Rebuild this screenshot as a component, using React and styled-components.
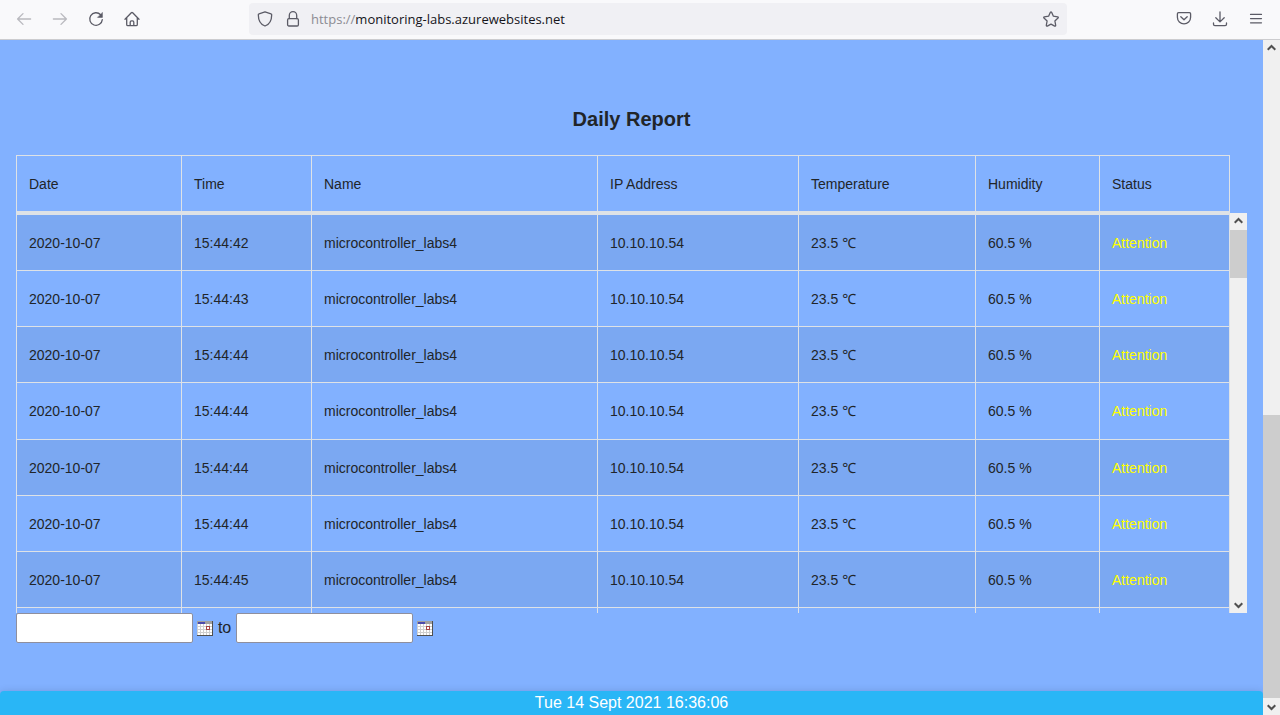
import React from "react";
import styled, { createGlobalStyle } from "styled-components";

const GlobalStyle = createGlobalStyle`
  *, *::before, *::after { box-sizing: border-box; }
  body {
    margin: 0;
    background: #82b1ff;
    color: #212529;
    font-family: "Liberation Sans", Arial, "Noto Sans", "Open Sans", sans-serif;
    font-size: 16px;
    line-height: 24px;
  }
`;

const Window = styled.div`
  display: flex;
  flex-direction: column;
  height: 100vh;
  overflow: hidden;
`;

const Toolbar = styled.header`
  display: flex;
  flex: none;
  align-items: center;
  height: 40px;
  padding: 0 16px 1px;
  background: #f9f9fb;
  border-bottom: 1px solid #cccccf;
`;

const ButtonGroup = styled.div`
  display: flex;
  gap: ${(p) => p.$gap || 20}px;
`;

const IconButton = styled.button`
  display: block;
  width: 16px;
  height: 16px;
  padding: 0;
  border: 0;
  background: none;
  color: #5b5b66;
  opacity: ${(p) => (p.disabled ? 0.4 : 1)};

  svg { display: block; }
`;

const AddressBar = styled.div`
  display: flex;
  flex: 1;
  align-items: center;
  gap: 10px;
  height: 32px;
  margin: 0 109px;
  padding: 0 8px;
  border-radius: 4px;
  background: #f0f0f4;
`;

const Address = styled.a`
  flex: 1;
  color: #15141a;
  font-family: "Open Sans", "Noto Sans", sans-serif;
  font-size: 13px;
  text-decoration: none;
`;

const Scheme = styled.span`
  color: #8c8c93;
`;

const Viewport = styled.div`
  display: flex;
  flex: 1;
  min-height: 0;
`;

const Page = styled.div`
  display: flex;
  flex: 1;
  flex-direction: column;
  min-width: 0;
`;

const Main = styled.main`
  flex: 1;
  padding: 67px 16px 0;
`;

const Title = styled.h1`
  margin: 0 0 24px;
  font-size: 20px;
  line-height: 24px;
  text-align: center;
`;

const TableFrame = styled.div`
  display: flex;
  height: 458px;
`;

const TableClip = styled.div`
  flex: 1;
  overflow: hidden;
`;

const Table = styled.table`
  width: 100%;
  height: 509px;
  table-layout: fixed;
  border-collapse: separate;
  border-spacing: 0;
  border: solid #dee2e6;
  border-width: 1px 0 0 1px;
  font-size: 14px;
  line-height: 21px;
`;

const HeadCell = styled.th`
  padding: 18px 12px 16px;
  border: solid #dee2e6;
  border-width: 0 1px 4px 0;
  font-weight: 400;
  text-align: left;
`;

const Row = styled.tr`
  &:nth-child(odd) { background: rgba(0, 0, 0, 0.05); }
`;

const Cell = styled.td`
  height: 56px;
  padding: 18px 12px 16px;
  border: solid #dee2e6;
  border-width: 0 1px 1px 0;
  color: ${(p) => (p.$alert ? "#ffff00" : "inherit")};
`;

const Track = styled.div`
  display: flex;
  flex: none;
  flex-direction: column;
  width: 17px;
  margin-top: ${(p) => p.$top || 0}px;
  background: #f0f0f0;
`;

const TrackButton = styled.button`
  display: flex;
  flex: none;
  align-items: center;
  justify-content: center;
  height: 17px;
  padding: 0;
  border: 0;
  background: #f0f0f0;
`;

const TrackSpace = styled.div`
  flex: ${(p) => p.$grow} 1 0;
`;

const Thumb = styled.div`
  flex: ${(p) => p.$grow} 1 0;
  background: #cdcdcd;
`;

const RangeForm = styled.form`
  height: 30px;
  line-height: 30px;
  white-space: nowrap;
`;

const DateInput = styled.input`
  width: 177px;
  height: 30px;
  padding: 1px 4px;
  border: 1px solid #8f8f9d;
  border-radius: 2px;
  background: #fff;
  color: #212529;
  font: inherit;
  vertical-align: top;
`;

const CalendarButton = styled.button`
  width: 16px;
  height: 15px;
  padding: 0;
  border: 0;
  background: none;
  vertical-align: middle;

  svg { display: block; }
`;

const Footer = styled.footer`
  height: 24px;
  border-radius: 4px 4px 0 0;
  background: #29b6f6;
  box-shadow: 0 2px 10px rgba(0, 0, 0, 0.2);
  color: #fff;
  text-align: center;
`;

const Glyph = ({ children, width = 1.3 }) => (
  <svg
    width="16"
    height="16"
    viewBox="0 0 16 16"
    fill="none"
    stroke="currentColor"
    strokeWidth={width}
    strokeLinecap="round"
    strokeLinejoin="round"
    aria-hidden="true"
  >
    {children}
  </svg>
);

const Chevron = ({ down }) => (
  <svg width="9" height="9" viewBox="0 0 9 9" fill="none" stroke="#505050" strokeWidth="2" aria-hidden="true">
    <path d={down ? "M.7 3.200 4.500 7 8.300 3.200" : "M.7 5.800 4.500 2 8.300 5.800"} />
  </svg>
);

const CalendarIcon = () => (
  <svg width="16" height="15" viewBox="0 0 16 15" shapeRendering="crispEdges" aria-hidden="true">
    <path fill="#fff" d="M0 0h16v15H0z" />
    <path
      stroke="#cfcfcf"
      d="M0 5.5h15M0 8.5h15M0 11.5h15M3.5 3v11M6.5 3v11M9.5 3v11M12.5 3v11M.5 3v11"
    />
    <path fill="#a0a0a0" d="M0 0h16v3H0z" />
    <path fill="#4a4aad" d="M1 1h7v2H1z" />
    <path fill="#fff" stroke="#a84444" d="M9.5 5.5h3v3h-3z" />
    <path fill="#505050" d="M15 0h1v15H0v-1h15z" />
  </svg>
);

const ScrollBar = ({ label, before, thumb, after, top }) => (
  <Track $top={top}>
    <TrackButton type="button" aria-label={`Scroll ${label} up`}><Chevron /></TrackButton>
    <TrackSpace $grow={before} />
    <Thumb $grow={thumb} />
    <TrackSpace $grow={after} />
    <TrackButton type="button" aria-label={`Scroll ${label} down`}><Chevron down /></TrackButton>
  </Track>
);

const columns = [
  ["Date", 165],
  ["Time", 130],
  ["Name", 286],
  ["IP Address", 201],
  ["Temperature", 177],
  ["Humidity", 124],
  ["Status", 130],
];

const times = [
  "15:44:42",
  "15:44:43",
  "15:44:44",
  "15:44:44",
  "15:44:44",
  "15:44:44",
  "15:44:45",
];

export default function App() {
  return (
    <Window>
      <GlobalStyle />
      <Toolbar>
        <ButtonGroup>
          <IconButton type="button" aria-label="Back" disabled>
            <Glyph><path d="M14.6 8H1.6M7 2.6 1.6 8 7 13.4" /></Glyph>
          </IconButton>
          <IconButton type="button" aria-label="Forward" disabled>
            <Glyph><path d="M1.4 8h13M9 2.6 14.4 8 9 13.4" /></Glyph>
          </IconButton>
          <IconButton type="button" aria-label="Reload">
            <Glyph>
              <path d="M12.6 3.7A6.3 6.3 0 1 0 14.3 8.6" />
              <path d="M14.4 1.8v4.6H9.8z" fill="currentColor" strokeWidth="0.6" />
            </Glyph>
          </IconButton>
          <IconButton type="button" aria-label="Home">
            <Glyph>
              <path d="M1 8.3 7.3 1.8q.7-.6 1.4 0L15 8.3M2.7 7v6.4q0 1.2 1.2 1.2h8.2q1.2 0 1.2-1.2V7" />
              <path d="M6.2 14.4v-3.2q0-1.4 1.3-1.4h1q1.3 0 1.3 1.4v3.2" />
            </Glyph>
          </IconButton>
        </ButtonGroup>
        <AddressBar>
          <ButtonGroup $gap={12}>
            <IconButton type="button" aria-label="Tracking protection">
              <Glyph>
                <path d="M8 .8 14 2.8q.7.2.7.9C14.7 8.600 12.400 13.400 8 15 3.600 13.400 1.300 8.600 1.300 3.700q0-.7.7-.9z" />
              </Glyph>
            </IconButton>
            <IconButton type="button" aria-label="Connection security">
              <Glyph>
                <rect x="2.6" y="7.6" width="10.8" height="7.4" rx="1.3" />
                <path d="M4.3 7.6V4.400a3.700 3.700 0 0 1 7.400 0v3.200" />
              </Glyph>
            </IconButton>
          </ButtonGroup>
          <Address href="https://monitoring-labs.azurewebsites.net">
            <Scheme>https://</Scheme>monitoring-labs.azurewebsites.net
          </Address>
          <IconButton type="button" aria-label="Bookmark this page">
            <Glyph>
              <path d="M7.4 1.3q.6-1 1.2 0l1.8 3.9 4.2.6q1.1.3.4 1.2l-3.1 3 .8 4.3q0 1.1-1 .8L8 13.100l-3.700 2q-1 .3-1-.8l.8-4.300-3.100-3q-.7-.9.4-1.200l4.200-.6z" />
            </Glyph>
          </IconButton>
        </AddressBar>
        <ButtonGroup>
          <IconButton type="button" aria-label="Save to Pocket">
            <Glyph>
              <path d="M2.5 1.700h11q1.100 0 1.100 1.100v3.500a6.600 6.600 0 0 1-13.200 0V2.800q0-1.100 1.100-1.100z" />
              <path d="M4.8 5.700 8 8.800l3.200-3.100" />
            </Glyph>
          </IconButton>
          <IconButton type="button" aria-label="Downloads">
            <Glyph>
              <path d="M8 .8v9.800M3.800 6.700 8 10.900l4.200-4.200" />
              <path d="M1.500 12v1.200q0 1.400 1.400 1.400h10.200q1.400 0 1.400-1.400V12" />
            </Glyph>
          </IconButton>
          <IconButton type="button" aria-label="Open menu">
            <Glyph width={1.2}><path d="M2.500 3.400h11M2.500 7.600h11M2.500 11.800h11" /></Glyph>
          </IconButton>
        </ButtonGroup>
      </Toolbar>
      <Viewport>
        <Page>
          <Main>
            <Title>Daily Report</Title>
            <TableFrame>
              <TableClip>
                <Table>
                  <colgroup>
                    {columns.map(([name, width]) => (
                      <col key={name} width={width} />
                    ))}
                  </colgroup>
                  <thead>
                    <tr>
                      {columns.map(([name]) => (
                        <HeadCell key={name} scope="col">{name}</HeadCell>
                      ))}
                    </tr>
                  </thead>
                  <tbody>
                    {times.map((time, i) => (
                      <Row key={i}>
                        <Cell>2020-10-07</Cell>
                        <Cell>{time}</Cell>
                        <Cell>microcontroller_labs4</Cell>
                        <Cell>10.10.10.54</Cell>
                        <Cell>23.5 ℃</Cell>
                        <Cell>60.5 %</Cell>
                        <Cell $alert>Attention</Cell>
                      </Row>
                    ))}
                    <Row>
                      {columns.map(([name]) => (
                        <Cell key={name} />
                      ))}
                    </Row>
                  </tbody>
                </Table>
              </TableClip>
              <ScrollBar label="table" top={58} before={0} thumb={48} after={318} />
            </TableFrame>
            <RangeForm>
              <DateInput type="text" aria-label="Start date" />{" "}
              <CalendarButton type="button" aria-label="Pick start date"><CalendarIcon /></CalendarButton>{" "}
              to{" "}
              <DateInput type="text" aria-label="End date" />{" "}
              <CalendarButton type="button" aria-label="Pick end date"><CalendarIcon /></CalendarButton>
            </RangeForm>
          </Main>
          <Footer>Tue 14 Sept 2021 16:36:06</Footer>
        </Page>
        <ScrollBar label="page" before={358} thumb={283} after={0} />
      </Viewport>
    </Window>
  );
}
